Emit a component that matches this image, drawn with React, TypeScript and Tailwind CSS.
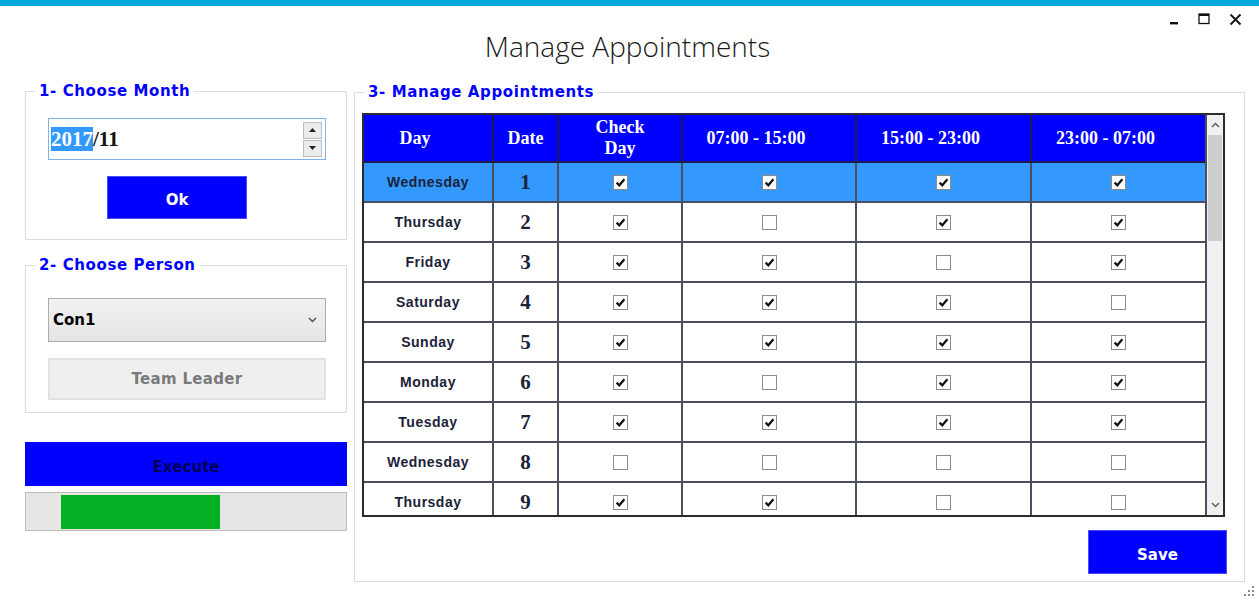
import React from "react";

type Row = { day: string; date: number; checks: boolean[] };

const rows: Row[] = [
  { day: "Wednesday", date: 1, checks: [true, true, true, true] },
  { day: "Thursday", date: 2, checks: [true, false, true, true] },
  { day: "Friday", date: 3, checks: [true, true, false, true] },
  { day: "Saturday", date: 4, checks: [true, true, true, false] },
  { day: "Sunday", date: 5, checks: [true, true, true, true] },
  { day: "Monday", date: 6, checks: [true, false, true, true] },
  { day: "Tuesday", date: 7, checks: [true, true, true, true] },
  { day: "Wednesday", date: 8, checks: [false, false, false, false] },
  { day: "Thursday", date: 9, checks: [true, true, false, false] },
];

const headers = [
  { label: "Day", shift: true },
  { label: "Date", shift: false },
  { label: "Check\nDay", shift: false },
  { label: "07:00 - 15:00", shift: true },
  { label: "15:00 - 23:00", shift: true },
  { label: "23:00 - 07:00", shift: true },
];

const cols = "grid grid-cols-[130px_65px_124px_174px_175px_173px]";
const verdana = "font-['DejaVu_Sans',Verdana,sans-serif]";
const times = "font-['Liberation_Serif','Times_New_Roman',serif]";

function Check({ checked }: { checked: boolean }) {
  return (
    <span className="inline-flex h-[15px] w-[15px] items-center justify-center border border-[#8c8c8c] bg-white">
      {checked ? (
        <svg width="11" height="11" viewBox="0 0 11 11">
          <path d="M1.6 5.6 L4.3 8.3 L9.4 2.2" fill="none" stroke="#111" strokeWidth="2.2" />
        </svg>
      ) : null}
    </span>
  );
}

function Legend({ children }: { children: React.ReactNode }) {
  return (
    <legend className={`ml-[9px] px-[4px] text-[15px] leading-[18px] font-bold tracking-[0.6px] text-[#0000ff] ${verdana}`}>
      {children}
    </legend>
  );
}

export default function App() {
  return (
    <div className="relative h-[603px] w-[1259px] overflow-hidden bg-white font-['Liberation_Sans',Arial,sans-serif]">
      <div className="h-[6px] bg-[#00a9da]" />

      <div className="relative h-[76px]">
        <div className="absolute right-[17px] top-[7px] flex items-start gap-[19px]">
          <svg width="10" height="14" viewBox="0 0 10 14">
            <rect x="1" y="9" width="8" height="2.4" fill="#111" />
          </svg>
          <svg width="12" height="12" viewBox="0 0 12 12">
            <rect x="1" y="1" width="10" height="9.5" fill="none" stroke="#111" strokeWidth="1.3" />
            <rect x="1" y="1" width="10" height="2" fill="#111" />
          </svg>
          <svg width="13" height="13" viewBox="0 0 13 13">
            <path d="M1.5 1.5 L11.5 11.5 M11.5 1.5 L1.5 11.5" stroke="#111" strokeWidth="1.8" />
          </svg>
        </div>
        <div className="pr-[4px] pt-[21px] text-center font-['Open_Sans',sans-serif] text-[28px] font-light leading-[38px] text-[#1a1a1a]">
          Manage Appointments
        </div>
      </div>

      <div className="flex gap-[7px] pl-[25px]">
        <div className="flex w-[322px] flex-col">
          <fieldset className="border border-[#dcdcdc]">
            <Legend>1- Choose Month</Legend>
            <div className="pb-[20px] pl-[22px] pr-[20px]">
              <div className="mt-[18px] flex h-[42px] items-center border border-[#7eb4ea] bg-white pl-[2px] pr-[3px]">
                <span className={`${times} text-[21px] font-bold leading-[26px]`}>
                  <span className="bg-[#3399ff] text-white">2017</span>
                  <span className="text-[#111]">/11</span>
                </span>
                <div className="ml-auto flex flex-col gap-[1px]">
                  <div className="flex h-[17px] w-[19px] items-center justify-center border border-[#bdbdbd] bg-[#ececec]">
                    <svg width="7" height="4" viewBox="0 0 7 4"><path d="M0 4 L3.5 0 L7 4 Z" fill="#222" /></svg>
                  </div>
                  <div className="flex h-[17px] w-[19px] items-center justify-center border border-[#bdbdbd] bg-[#ececec]">
                    <svg width="7" height="4" viewBox="0 0 7 4"><path d="M0 0 L3.5 4 L7 0 Z" fill="#222" /></svg>
                  </div>
                </div>
              </div>
              <button className={`ml-[59px] mt-[16px] h-[43px] w-[140px] border border-[#4b4bff] bg-[#0000ff] pt-[5px] text-[15px] font-bold text-white ${verdana}`}>
                Ok
              </button>
            </div>
          </fieldset>

          <fieldset className="mt-[16px] border border-[#dcdcdc]">
            <Legend>2- Choose Person</Legend>
            <div className="pb-[12px] pl-[22px] pr-[20px]">
              <div className="mt-[24px] flex h-[44px] items-center border border-[#acacac] bg-gradient-to-b from-[#f2f2f2] to-[#e5e5e5] pl-[4px] pr-[8px]">
                <span className={`text-[15px] font-bold text-black ${verdana}`}>Con1</span>
                <svg className="ml-auto" width="9" height="6" viewBox="0 0 9 6">
                  <path d="M1 1 L4.5 4.5 L8 1" fill="none" stroke="#555" strokeWidth="1.5" />
                </svg>
              </div>
              <div className={`mt-[16px] flex h-[42px] items-center justify-center border-2 border-[#e2e2e2] bg-[#efefef] text-[15px] font-bold tracking-[0.3px] text-[#7a7a7a] ${verdana}`}>
                Team Leader
              </div>
            </div>
          </fieldset>

          <button className={`mt-[29px] h-[44px] w-full bg-[#0000ff] pt-[6px] text-[15px] font-bold text-[#00005a] ${verdana}`}>
            Execute
          </button>
          <div className="mt-[6px] flex h-[39px] items-center border border-[#bcbcbc] bg-[#e6e6e6] pl-[35px]">
            <div className="h-[34px] w-[159px] bg-[#06b025]" />
          </div>
        </div>

        <fieldset className="mt-[1px] h-[499px] w-[891px] border border-[#dcdcdc]">
          <Legend>3- Manage Appointments</Legend>
          <div className="pl-[7px]">
            <div className="mt-[12px] flex h-[404px] w-[863px] overflow-hidden border-2 border-[#2b2b33]">
              <div className="flex w-[841px] flex-col">
                <div className={`${cols} h-[48px] shrink-0 border-b-2 border-[#1c1c4a] bg-[#0000ff] text-white ${times} text-[18px] font-bold`}>
                  {headers.map((h, i) => (
                    <div
                      key={h.label}
                      className={`flex items-center justify-center whitespace-pre-line text-center leading-[21px] ${h.shift ? "pr-[26px]" : ""} ${i < 5 ? "border-r-2 border-[#1c1c4a]" : ""}`}
                    >
                      {h.label}
                    </div>
                  ))}
                </div>
                {rows.map((r, ri) => (
                  <div
                    key={ri}
                    className={`${cols} h-[40px] shrink-0 border-b-2 border-[#4a4f60] ${ri === 0 ? "bg-[#3399ff]" : "bg-white"}`}
                  >
                    <div className="flex items-center justify-center border-r-2 border-[#4a4f60] text-[14px] font-bold tracking-[0.5px] text-[#1b2238]">
                      {r.day}
                    </div>
                    <div className={`flex items-center justify-center border-r-2 border-[#4a4f60] ${times} pt-[2px] text-[21px] font-bold text-[#1b2238]`}>
                      {r.date}
                    </div>
                    {r.checks.map((c, ci) => (
                      <div
                        key={ci}
                        className={`flex items-center justify-center ${ci < 3 ? "border-r-2 border-[#4a4f60]" : ""}`}
                      >
                        <Check checked={c} />
                      </div>
                    ))}
                  </div>
                ))}
              </div>
              <div className="flex w-[18px] flex-col border-l-2 border-[#4a4f60] bg-[#f0f0f0]">
                <div className="flex h-[20px] items-center justify-center">
                  <svg width="9" height="6" viewBox="0 0 9 6">
                    <path d="M1 5 L4.5 1.5 L8 5" fill="none" stroke="#606060" strokeWidth="1.5" />
                  </svg>
                </div>
                <div className="mx-[1px] h-[106px] bg-[#cdcdcd]" />
                <div className="flex-1" />
                <div className="flex h-[20px] items-center justify-center">
                  <svg width="9" height="6" viewBox="0 0 9 6">
                    <path d="M1 1 L4.5 4.5 L8 1" fill="none" stroke="#606060" strokeWidth="1.5" />
                  </svg>
                </div>
              </div>
            </div>
            <div className="mt-[13px] flex justify-end pr-[17px]">
              <button className={`h-[44px] w-[139px] border border-[#4b4bff] bg-[#0000ff] pt-[6px] text-[15px] font-bold text-white ${verdana}`}>
                Save
              </button>
            </div>
          </div>
        </fieldset>
      </div>

      <svg className="absolute bottom-[6px] right-[4px]" width="12" height="12" viewBox="0 0 12 12">
        {[
          [10, 2],
          [10, 6],
          [6, 6],
          [10, 10],
          [6, 10],
          [2, 10],
        ].map(([x, y], i) => (
          <rect key={i} x={x - 1} y={y - 1} width="2" height="2" fill="#8a8a8a" />
        ))}
      </svg>
    </div>
  );
}
